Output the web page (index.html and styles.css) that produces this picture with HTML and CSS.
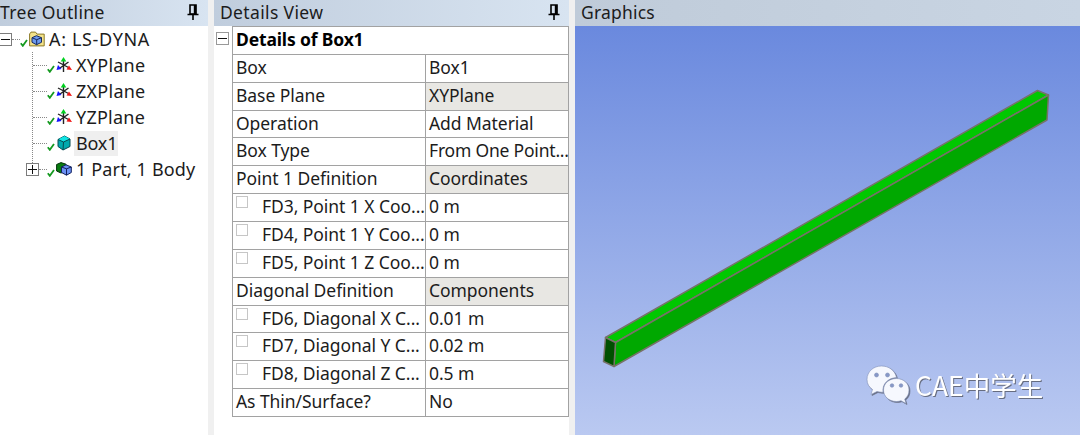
FILE: index.html
```html
<!DOCTYPE html>
<html lang="en">
<head>
    <meta charset="UTF-8">
    <meta name="viewport" content="width=device-width, initial-scale=1.0">
    <title>A: LS-DYNA</title>
    <link rel="stylesheet" href="styles.css">
</head>
<body>
    <!-- Shared icons -->
    <svg class="defs" width="0" height="0">
        <symbol id="pin" viewBox="0 0 12 16">
            <path d="M3 1h6v9H3z" fill="none" stroke="#000" stroke-width="1.6"/>
            <path d="M8 1v9" stroke="#000" stroke-width="2.4"/>
            <path d="M.5 10.5h11M6 10.5V16" stroke="#000" stroke-width="1.6"/>
        </symbol>
        <symbol id="check" viewBox="0 0 8 8">
            <path d="M.8 4.2l2 2.6L7 .9" fill="none" stroke="#159a20" stroke-width="1.8"/>
        </symbol>
        <symbol id="axes" viewBox="0 0 16 16">
            <path d="M7.500 4v11M2 5l10.500 5.500M12.500 5L4 11" stroke="#222" stroke-width="1.4" fill="none"/>
            <path d="M7.500 0l2.800 4.500H4.700z" fill="#00d020"/>
            <path d="M16 13l-5.500-.5 2.500-4z" fill="#f01818"/>
            <path d="M.5 13l1.500-5 3.500 4z" fill="#1414ff"/>
        </symbol>
        <symbol id="cube" viewBox="0 0 14 16">
            <path d="M1 4.500L7.500 1 13 4v7.500L6 15 1 11.500z" fill="#00a9ad" stroke="#064a50"/>
            <path d="M1 4.500L7.500 1 13 4 6.500 7z" fill="#10e4e4"/>
            <path d="M1 4.500l5.500 2.500L13 4M6.500 7L6 15" fill="none" stroke="#064a50"/>
        </symbol>
        <symbol id="parts" viewBox="0 0 16 14">
            <path d="M.6 2.500L5 .6l5 1.600v7L5 11 .6 9z" fill="#087c10" stroke="#03310a"/>
            <path d="M5.500 5L10 2.800 15.300 5v5.500L10.500 13.200 5.500 10.500z" fill="#6b91f5" stroke="#12205c"/>
            <path d="M5.500 5l5 1.800L15.300 5M10.500 6.800v6.400" fill="none" stroke="#12205c"/>
        </symbol>
        <symbol id="folder" viewBox="0 0 16 15">
            <path d="M.6 14.400V2.500L2 .6h4.500l1.500 2h7.200v11.800z" fill="#f3e28a" stroke="#8c7a28"/>
            <path d="M3 6.200l4.500-2 5 2v4.600l-5 2.400-4.500-2.400z" fill="#6c9af0" stroke="#16285e"/>
            <path d="M3 6.200l4.700 2 4.800-2M7.700 8.200v5" fill="none" stroke="#16285e"/>
        </symbol>
    </svg>

    <div class="workspace">
        <section class="panel tree-panel">
            <div class="panel-title tree-title"><span>Tree Outline</span><svg class="pin"><use href="#pin"/></svg></div>
            <div class="tree">
                <div class="tree-row root">
                    <span class="toggle minus"></span>
                    <span class="dots"></span>
                    <svg class="check"><use href="#check"/></svg>
                    <svg class="icon"><use href="#folder"/></svg>
                    <span class="label">A: LS-DYNA</span>
                </div>
                <div class="branch">
                    <div class="tree-row">
                        <span class="dots"></span>
                        <svg class="check"><use href="#check"/></svg>
                        <svg class="icon"><use href="#axes"/></svg>
                        <span class="label">XYPlane</span>
                    </div>
                    <div class="tree-row">
                        <span class="dots"></span>
                        <svg class="check"><use href="#check"/></svg>
                        <svg class="icon"><use href="#axes"/></svg>
                        <span class="label">ZXPlane</span>
                    </div>
                    <div class="tree-row">
                        <span class="dots"></span>
                        <svg class="check"><use href="#check"/></svg>
                        <svg class="icon"><use href="#axes"/></svg>
                        <span class="label">YZPlane</span>
                    </div>
                    <div class="tree-row">
                        <span class="dots"></span>
                        <svg class="check"><use href="#check"/></svg>
                        <svg class="icon"><use href="#cube"/></svg>
                        <span class="label selected">Box1</span>
                    </div>
                </div>
                <div class="tree-row last">
                    <span class="toggle plus"></span>
                    <span class="dots"></span>
                    <svg class="check"><use href="#check"/></svg>
                    <svg class="icon"><use href="#parts"/></svg>
                    <span class="label">1 Part, 1 Body</span>
                </div>
            </div>
        </section>

        <section class="panel details-panel">
            <div class="panel-title"><span>Details View</span><svg class="pin"><use href="#pin"/></svg></div>
            <div class="details">
                <span class="toggle minus"></span>
                <div class="grid">
                    <div class="group">Details of Box1</div>
                    <div class="name">Box</div><div class="value">Box1</div>
                    <div class="name">Base Plane</div><div class="value readonly">XYPlane</div>
                    <div class="name">Operation</div><div class="value">Add Material</div>
                    <div class="name">Box Type</div><div class="value tight">From One Point...</div>
                    <div class="name">Point 1 Definition</div><div class="value readonly">Coordinates</div>
                    <div class="name"><i class="box"></i>FD3, Point 1 X Coo...</div><div class="value">0 m</div>
                    <div class="name"><i class="box"></i>FD4, Point 1 Y Coo...</div><div class="value">0 m</div>
                    <div class="name"><i class="box"></i>FD5, Point 1 Z Coo...</div><div class="value">0 m</div>
                    <div class="name">Diagonal Definition</div><div class="value readonly">Components</div>
                    <div class="name"><i class="box"></i>FD6, Diagonal X C...</div><div class="value">0.01 m</div>
                    <div class="name"><i class="box"></i>FD7, Diagonal Y C...</div><div class="value">0.02 m</div>
                    <div class="name"><i class="box"></i>FD8, Diagonal Z C...</div><div class="value">0.5 m</div>
                    <div class="name">As Thin/Surface?</div><div class="value">No</div>
                </div>
            </div>
        </section>

        <section class="panel graphics-panel">
            <div class="panel-title graphics-title"><span>Graphics</span></div>
            <div class="viewport">
                <svg class="model" viewBox="575 26 505 409">
                    <g stroke="#777268" stroke-width="1.5" stroke-linejoin="round">
                        <path d="M605.500 337.500L1037.500 90.500l11 4.500L615.500 342.500z" fill="#00c800"/>
                        <path d="M615.500 342.500L1048.500 95l-1.500 25L614 366.500z" fill="#00a800"/>
                        <path d="M605.500 337.500l10 5-1.500 24-10.500-5z" fill="#005000"/>
                    </g>
                </svg>
                <div class="watermark">
                    <svg class="wechat" viewBox="0 0 44 40">
                        <path d="M15.500 1C7.500 1 1 6.500 1 14.500c0 4.500 2 7.500 5.500 10L5 29.500l6-3c2 .5 3.500.7 6 .7C16 19 22 13 30.500 12.500 29 5.500 23 1 15.500 1z"/>
                        <path d="M30.500 13.500C23 13.500 17.500 18.500 17.500 25S23 36.500 30.500 36.500c1.800 0 3.200-.3 4.500-.8l5 2.800-1.300-4.500C41.500 32 43 29 43 25c0-6.500-5.500-11.500-12.500-11.500z"/>
                        <g class="eyes">
                            <circle cx="10.500" cy="10" r="2"/><circle cx="21.500" cy="10" r="2"/>
                            <circle cx="26" cy="20.500" r="1.800"/><circle cx="35" cy="20.500" r="1.800"/>
                        </g>
                    </svg>
                    <span class="watermark-text">CAE中学生</span>
                </div>
            </div>
        </section>
    </div>
</body>
</html>
```
FILE: styles.css
```css
* {
    box-sizing: border-box;
}
body {
    margin: 0;
    background-color: #f0f0f0;
    color: #1c1c1c;
    font-family: "Noto Sans", "Noto Sans CJK SC", sans-serif;
    font-size: 17.5px;
    overflow: hidden;
}
.defs {
    display: block;
}
.workspace {
    display: grid;
    grid-template-columns: 208px 355px 505px;
    column-gap: 6px;
    height: 435px;
}
.panel {
    background-color: #fff;
    white-space: nowrap;
    overflow: hidden;
}
.panel-title {
    display: flex;
    align-items: center;
    justify-content: space-between;
    height: 26px;
    padding: 0 9px 2px 6px;
    background: linear-gradient(90deg, #c0cddd, #d8e4f1);
    letter-spacing: .35px;
}
.tree-title {
    padding-left: 0;
}
.graphics-title {
    background: linear-gradient(90deg, #bfcbd9, #c9d5e3);
    letter-spacing: .2px;
}
.pin {
    width: 12px;
    height: 16px;
    margin-top: -1px;
}

/* Tree */
.tree-row {
    display: flex;
    align-items: center;
    height: 26px;
}
.toggle {
    flex: none;
    width: 13px;
    height: 13px;
    border: 1px solid #7c7c7c;
    background: linear-gradient(#111, #111) center / 9px 1px no-repeat;
}
.plus {
    background: linear-gradient(#111, #111) center / 9px 1px no-repeat, linear-gradient(#111, #111) center / 1px 9px no-repeat;
}
.root .toggle {
    margin-left: -1px;
}
.dots {
    flex: none;
    width: 14px;
    border-top: 1px dotted #888;
}
.root .dots,
.last .dots {
    width: 8px;
}
.check {
    flex: none;
    width: 8px;
    height: 8px;
    margin-top: 8px;
}
.icon {
    flex: none;
    width: 16px;
    height: 16px;
    margin: 0 2px 0 1px;
}
.label {
    height: 25px;
    padding: 0 1px 0 2px;
    font-size: 18px;
    line-height: 24px;
    letter-spacing: .15px;
}
.root .label {
    letter-spacing: .65px;
}
.selected {
    background-color: #efefef;
}
.branch {
    margin: 0 0 -7px 32px;
    padding-bottom: 7px;
    border-left: 1px dotted #888;
}
.branch .label {
    letter-spacing: .25px;
}
.branch .selected {
    letter-spacing: -.2px;
}
.last {
    padding-left: 26px;
}

/* Details grid */
.details {
    display: flex;
    align-items: flex-start;
}
.details .toggle {
    margin: 6px 3px 0 2px;
    border-color: #999;
}
.grid {
    flex: 1;
    min-width: 0;
    display: grid;
    grid-template-columns: 193px minmax(0, 1fr);
    grid-template-rows: repeat(14, 27.86px);
    height: 391px;
    border: 1px solid #a2a2a2;
    border-bottom: 0;
    letter-spacing: -.06px;
}
.group,
.name,
.value {
    border-bottom: 1px solid #a2a2a2;
    padding-left: 3px;
    line-height: 25px;
}
.group {
    grid-column: span 2;
    font-weight: 700;
    letter-spacing: -.15px;
    color: #000;
}
.name {
    display: flex;
    border-right: 1px solid #a2a2a2;
}
.readonly {
    background-color: #e8e7e3;
}
.tight {
    letter-spacing: -.2px;
}
.box {
    flex: none;
    width: 12px;
    height: 12px;
    margin: 2px 14px 0 0;
    border: 1px solid #c6c6c6;
}

/* Graphics */
.viewport {
    position: relative;
    height: 409px;
    background: linear-gradient(#6a89de, #bac9f1);
}
.model {
    display: block;
    width: 505px;
    height: 409px;
}
.watermark {
    position: absolute;
    left: 291px;
    top: 339px;
    display: flex;
    align-items: center;
    color: #fff;
    filter: drop-shadow(1px 1px .5px #666c80);
}
.wechat {
    width: 44px;
    height: 40px;
    fill: #f6f8fe;
    stroke: #8290b8;
    stroke-width: .6;
}
.eyes {
    fill: #8798c8;
}
.watermark-text {
    margin-left: 5px;
    font-family: "Noto Sans CJK SC", sans-serif;
    font-weight: 400;
    font-size: 26.5px;
    line-height: 40px;
}
```
